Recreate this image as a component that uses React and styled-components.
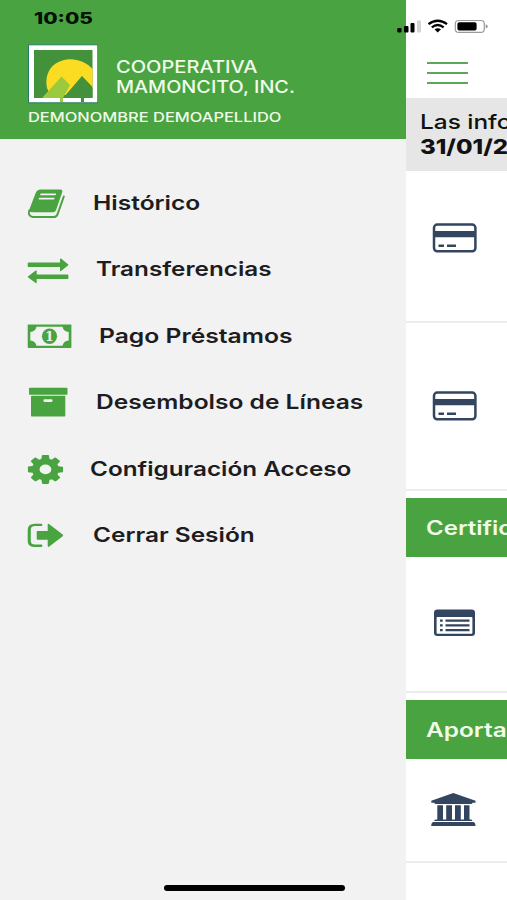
import React from 'react';
import styled, { createGlobalStyle } from 'styled-components';

const GlobalStyle = createGlobalStyle`
    * {
        box-sizing: border-box;
    }

    body {
        margin: 0;
        background: #ffffff;
        font-family: Inter, "Liberation Sans", sans-serif;
    }
`

const Screen = styled.div`
    position: relative;
    display: flex;
    width: 507px;
    height: 900px;
    overflow: hidden;
    background: #ffffff;
`

const Drawer = styled.aside`
    flex: none;
    width: 406px;
    background: #f2f2f2;
`

const DrawerHeader = styled.header`
    height: 139px;
    padding: 44px 0 0 28px;
    background: #49a340;
    color: #f1fbe9;
`

const Brand = styled.div`
    display: flex;
    gap: 18px;
    height: 60px;
`

const BrandName = styled.div`
    padding-top: 13px;
`

const Text = styled.span`
    display: block;
    width: max-content;
    font-size: ${props => props.$size}px;
    font-weight: ${props => props.$weight || 600};
    line-height: ${props => props.$line || 20}px;
    white-space: nowrap;
    transform: scaleX(${props => props.$stretch || 1.2});
    transform-origin: left center;
`

const UserName = styled.div`
    padding-top: 3px;
`

const Menu = styled.nav`
    padding-top: 30.7px;
`

const MenuItem = styled.div`
    display: flex;
    align-items: center;
    gap: 26px;
    height: 66.5px;
    padding-left: 27px;
    color: #1d1d1f;

    svg {
        flex: none;
        fill: #49a340;
    }
`

const Page = styled.main`
    flex: 1;
    min-width: 0;
    overflow: hidden;
    color: #34465f;
`

const TopBar = styled.div`
    display: flex;
    flex-direction: column;
    gap: 8px;
    height: 98px;
    padding: 62px 0 0 21px;
`

const MenuLine = styled.div`
    width: 41px;
    height: 2px;
    background: #5ca657;
`

const Notice = styled.div`
    height: 73px;
    padding: 12px 0 0 13.5px;
    background: #e6e6e6;
    color: #111111;
`

const Account = styled.div`
    height: ${props => props.$height}px;
    padding: ${props => props.$top}px 0 0 25px;
    border-bottom: 2px solid #ececec;

    svg {
        display: block;
    }
`

const SectionTitle = styled.div`
    height: 59px;
    margin-top: ${props => props.$gap}px;
    padding: 19.5px 0 0 20px;
    background: #49a340;
    color: #f1fbe9;
`

const Clock = styled.div`
    position: absolute;
    top: 8px;
    left: 34px;
    color: #041003;
`

const StatusIcons = styled.svg`
    position: absolute;
    top: 18px;
    left: 396px;
`

const HomeIndicator = styled.div`
    position: absolute;
    left: 164px;
    bottom: 9px;
    width: 181px;
    height: 6px;
    border-radius: 3px;
    background: #000000;
`

function Logo(){
    return (
        <svg width="70" height="60" viewBox="0 0 70 60">
            <rect x="0.5" y="0.8" width="69.3" height="58" fill="#ffffff" stroke="#277d62" />
            <rect x="6" y="6" width="58.5" height="48" fill="#43913b" />
            <path d="M19 44C17 34 20 25 27 20C38 12 55 14 64.5 25V43L54 32L38 51H22Z" fill="#fbdc22" />
            <path d="M14 54L33.500 32.500L42 41L35 54V58H32V54Z" fill="#9bca3c" />
            <path d="M35 54L54 32.500L64.500 44V54H56V58H53V54Z" fill="#43913b" />
        </svg>
    )
}

// icons are 40px high, row centre at y = 20
function BookIcon(){
    return (
        <svg width="40" height="40" viewBox="0 0 40 40">
            <path d="M13.500 6.500H33Q36 6.500 35.200 9.300L29 27.300Q28.300 29.300 26 29.300H5.500Q1.500 29.300 2.600 25.800L8.700 10Q10 6.500 13.500 6.500ZM14.300 10.400Q13.500 10.400 13.200 11.300T13.700 12.200H28Q28.800 12.200 29.100 11.300T28.600 10.400ZM12.800 14.700Q12 14.700 11.700 15.600T12.200 16.500H26.500Q27.300 16.500 27.600 15.600T27.100 14.700Z" fillRule="evenodd" />
            <path d="M2.200 27.500C1.200 31 2.500 34 6 34H26.500Q29.500 34 30.500 31.300L36.800 13.500" style={{ fill: 'none' }} stroke="#49a340" strokeWidth="2" strokeLinecap="round" />
        </svg>
    )
}

function ExchangeIcon(){
    return (
        <svg width="42.5" height="40" viewBox="0 0 42.5 40">
            <path d="M1.500 13.500H33V10.200Q33 9 34 9.600L41 15.200Q41.800 15.800 41 16.400L34 22Q33 22.600 33 21.400V18H1.500Q0.700 18 0.700 17.200V14.300Q0.700 13.500 1.500 13.500Z" />
            <path d="M40.600 25.500H9.700V22.200Q9.700 21 8.700 21.600L1.200 27.200Q0.400 27.800 1.200 28.400L8.700 34Q9.700 34.600 9.700 33.400V30H40.600Q41.400 30 41.400 29.200V26.300Q41.400 25.500 40.600 25.500Z" />
        </svg>
    )
}

function MoneyIcon(){
    return (
        <svg width="45.5" height="40" viewBox="0 0 45.5 40">
            <rect x="0.7" y="8.500" width="43.700" height="23.500" rx="0.8" />
            <path d="M9.500 10.700H35.500Q36.500 15.500 41.700 16V24.500Q36.500 25 35.500 29.800H9.500Q8.500 25 3.300 24.500V16Q8.500 15.500 9.500 10.700Z" style={{ fill: '#f2f2f2' }} />
            <ellipse cx="22.500" cy="20.200" rx="7.600" ry="7.700" />
            <text x="22.500" y="24.700" textAnchor="middle" fontFamily="DejaVu Serif" fontWeight="700" fontSize="12" style={{ fill: '#f2f2f2' }}>1</text>
        </svg>
    )
}

function ArchiveIcon(){
    return (
        <svg width="42.5" height="40" viewBox="0 0 42.5 40">
            <rect x="2" y="5.700" width="38.500" height="7" rx="0.8" />
            <path d="M4.800 13.700H37.500Q38.300 13.700 38.300 14.500V33.700Q38.300 34.500 37.500 34.500H4.800Q4 34.500 4 33.700V14.500Q4 13.700 4.800 13.700ZM17.700 17.200A1.300 1.300 0 0 0 17.700 19.900H24.300A1.300 1.300 0 0 0 24.300 17.200Z" />
        </svg>
    )
}

function CogIcon(){
    return (
        <svg width="37" height="40" viewBox="0 0 37 40">
            <svg x="0.7" y="5.900" width="35.500" height="29" viewBox="128 128 1536 1536" preserveAspectRatio="none">
                <path d="M1152 896q0-106-75-181t-181-75-181 75-75 181 75 181 181 75 181-75 75-181zm512-109v222q0 12-8 23t-20 13l-185 28q-19 54-39 91 35 50 107 138 10 12 10 25t-9 23q-27 37-99 108t-94 71q-12 0-26-9l-138-108q-44 23-91 38-16 136-29 186-7 28-36 28h-222q-14 0-24.500-8.500t-11.500-21.500l-28-184q-49-16-90-37l-141 107q-10 9-25 9-14 0-25-11-126-114-165-168-7-10-7-23 0-12 8-23 15-21 51-66.500t54-70.500q-27-50-41-99l-183-27q-13-2-21-12.500t-8-23.500v-222q0-12 8-23t19-13l186-28q14-46 39-92-40-57-107-138-10-12-10-24 0-10 9-23 26-36 98.500-107.500t94.500-71.500q13 0 26 10l138 107q44-23 91-38 16-136 29-186 7-28 36-28h222q14 0 24.500 8.500t11.500 21.500l28 184q49 16 90 37l142-107q9-9 24-9 13 0 25 10 129 119 165 170 7 8 7 22 0 12-8 23-15 21-51 66.500t-54 70.500q26 50 41 98l183 28q13 2 21 12.500t8 23.500z" />
            </svg>
        </svg>
    )
}

function SignOutIcon(){
    return (
        <svg width="40" height="40" viewBox="0 0 40 40">
            <path d="M14.500 8.700H8Q0.700 8.700 0.700 14.700V26Q0.700 32 8 32H14.500Q15.300 32 15.300 31V30.400Q15.300 29.600 14.500 29.600H8Q3.800 29.600 3.800 26V14.700Q3.800 11.100 8 11.100H14.500Q15.300 11.100 15.300 10.300V9.700Q15.300 8.700 14.500 8.700Z" />
            <path d="M10.700 16H20.700V10Q20.700 8.200 22.300 9.200L35.700 19.600Q36.600 20.400 35.700 21.200L22.300 31.600Q20.700 32.600 20.700 30.800V24.800H10.700Q9.700 24.800 9.700 23.800V17Q9.700 16 10.700 16Z" />
        </svg>
    )
}

function CardIcon(){
    return (
        <svg width="46" height="30" viewBox="0 0 46 30">
            <rect x="3" y="1.600" width="41.400" height="26.600" rx="3.200" fill="none" stroke="currentColor" strokeWidth="2.500" />
            <path d="M3 8H45V14.300H3Z M7.500 21.500H13V24H7.500Z M16 21.500H25V24H16Z" fill="currentColor" />
        </svg>
    )
}

function ListIcon(){
    return (
        <svg width="46" height="28" viewBox="0 0 46 28">
            <path d="M6.500 0.500H40.500Q44 0.500 44 3.500V24Q44 27 40.500 27H6.500Q3 27 3 24V3.500Q3 0.500 6.500 0.500ZM6.500 8Q5.600 8 5.600 8.800V23.800Q5.600 24.700 6.500 24.700H40.500Q41.400 24.700 41.400 23.800V8.800Q41.400 8 40.500 8Z" fill="currentColor" fillRule="evenodd" />
            <path d="M9 11.700H11.700M14.500 11.700H38.500M9 16.400H11.700M14.500 16.400H38.500M9 21.200H11.700M14.500 21.200H38.500" stroke="currentColor" strokeWidth="2.300" />
        </svg>
    )
}

function BankIcon(){
    return (
        <svg width="46" height="36" viewBox="0 0 46 36">
            <path d="M22.300 1L44.500 8.700V10.800H41.500Q41.500 12 40 12H5Q3.300 12 3.300 10.800H0.300V8.700Z" fill="currentColor" />
            <path d="M6.300 13.200H12V27.500H15.200V13.200H21V27.500H24V13.200H29.800V27.500H33V13.200H38.500V27.500H40Q41.400 27.500 41.400 29H3.200Q3.200 27.500 4.700 27.500H6.300Z" fill="currentColor" />
            <path d="M2.300 30H42.300Q44.500 30.500 44.500 34H0.200Q0.200 30.500 2.300 30Z" fill="currentColor" />
        </svg>
    )
}

const menuItems = [
    { label: 'Histórico', icon: BookIcon, stretch: 1.228 },
    { label: 'Transferencias', icon: ExchangeIcon, stretch: 1.215 },
    { label: 'Pago Préstamos', icon: MoneyIcon, stretch: 1.233 },
    { label: 'Desembolso de Líneas', icon: ArchiveIcon, stretch: 1.227 },
    { label: 'Configuración Acceso', icon: CogIcon, stretch: 1.215 },
    { label: 'Cerrar Sesión', icon: SignOutIcon, stretch: 1.222 },
]

export default function App(){
    return (
        <Screen>
            <GlobalStyle />
            <Drawer>
                <DrawerHeader>
                    <Brand>
                        <Logo />
                        <BrandName>
                            <Text $size={17} $weight={500} $stretch={1.18}>COOPERATIVA</Text>
                            <Text $size={17} $weight={500} $stretch={1.165}>MAMONCITO, INC.</Text>
                        </BrandName>
                    </Brand>
                    <UserName>
                        <Text $size={13.3} $weight={500} $stretch={1.235}>DEMONOMBRE DEMOAPELLIDO</Text>
                    </UserName>
                </DrawerHeader>
                <Menu>
                    {menuItems.map(({ label, icon: Icon, stretch }) => (
                        <MenuItem key={label}>
                            <Icon />
                            <Text $size={20} $line={28} $stretch={stretch}>{label}</Text>
                        </MenuItem>
                    ))}
                </Menu>
            </Drawer>
            <Page>
                <TopBar>
                    <MenuLine />
                    <MenuLine />
                    <MenuLine />
                </TopBar>
                <Notice>
                    <Text $size={20} $line={25} $weight={500} $stretch={1.22}>Las info</Text>
                    <Text $size={20} $line={25} $weight={800} $stretch={1.2}>31/01/2</Text>
                </Notice>
                <Account $height={152} $top={52}><CardIcon /></Account>
                <Account $height={168} $top={68}><CardIcon /></Account>
                <SectionTitle $gap={7}><Text $size={20}>Certific</Text></SectionTitle>
                <Account $height={136} $top={52}><ListIcon /></Account>
                <SectionTitle $gap={7}><Text $size={20} $stretch={1.22}>Aporta</Text></SectionTitle>
                <Account $height={104} $top={33}><BankIcon /></Account>
            </Page>
            <Clock><Text $size={16} $weight={800} $stretch={1.3}>10:05</Text></Clock>
            <StatusIcons width="94" height="18" viewBox="0 0 94 18">
                <rect x="1.300" y="10" width="4.200" height="4.500" rx="1.200" />
                <rect x="8" y="8" width="4.500" height="6.500" rx="1" />
                <rect x="14.500" y="5" width="4" height="9.500" rx="1" />
                <rect x="21" y="2.500" width="4" height="12" rx="1" fill="#d4d4d4" />
                <path d="M32.500 6.200Q41.700 -0.800 51 6.200M35.800 9.300Q41.700 4.800 47.700 9.300" fill="none" stroke="#000000" strokeWidth="2.300" />
                <path d="M38.500 11.300Q41.700 9 45 11.300L41.700 14.500Z" />
                <rect x="59.300" y="2.500" width="29" height="11.800" rx="3.400" fill="none" stroke="#9b9b9b" strokeWidth="1.200" />
                <rect x="61.400" y="4.300" width="19.200" height="8.200" rx="1.800" />
                <path d="M89.700 6.300Q91.800 6.800 91.800 8.400T89.700 10.500Z" fill="#9b9b9b" />
            </StatusIcons>
            <HomeIndicator />
        </Screen>
    )
}
